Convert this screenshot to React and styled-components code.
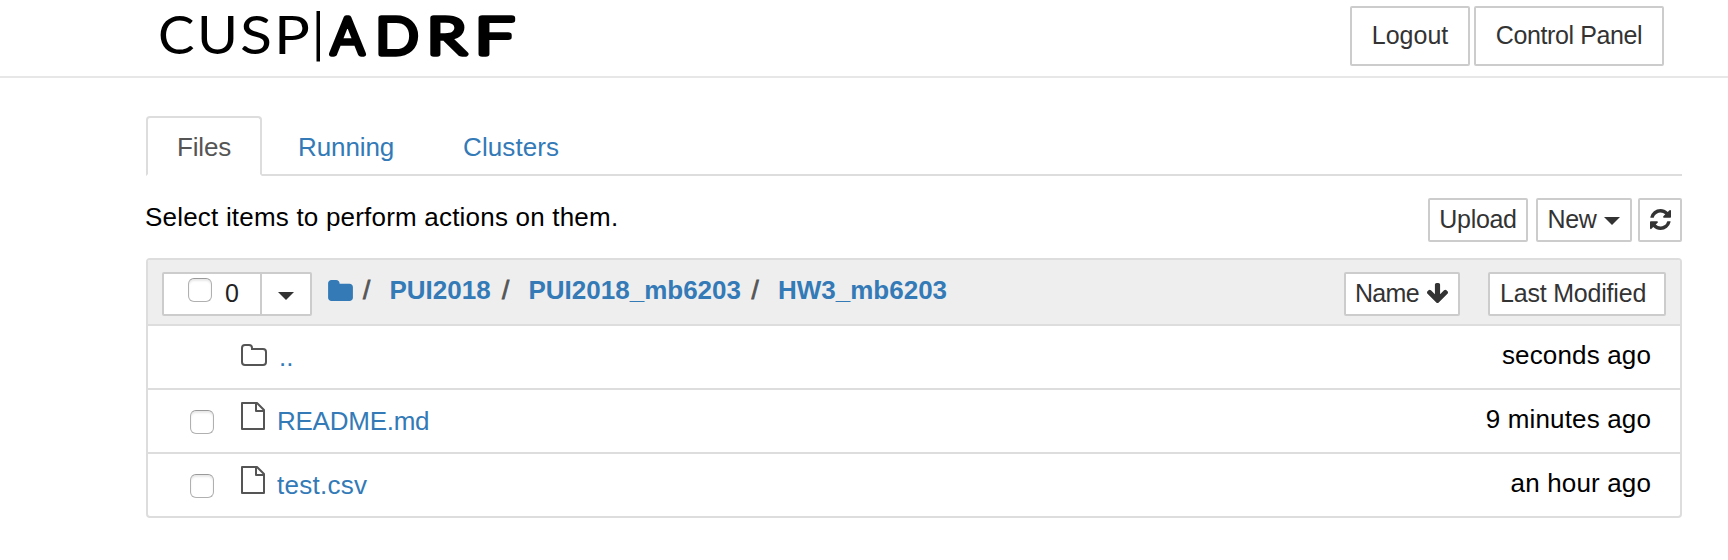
import React from "react";
import styled, { createGlobalStyle } from "styled-components";

const GlobalStyle = createGlobalStyle`
  * { box-sizing: border-box; }
  body {
    margin: 0;
    background: #fff;
    color: #000;
    font: 26px/36px "Liberation Sans", Arial, sans-serif;
  }
  svg { display: block; flex: none; }
`;

const Header = styled.header`
  display: flex;
  justify-content: space-between;
  align-items: flex-start;
  height: 78px;
  padding: 0 64px 0 158px;
  border-bottom: 2px solid #e7e7e7;
`;

const HeaderActions = styled.div`
  display: flex;
  gap: 4px;
  padding-top: 6px;
`;

const Button = styled.button`
  display: flex;
  align-items: center;
  justify-content: ${(p) => p.$align || "center"};
  width: ${(p) => p.$width}px;
  height: ${(p) => (p.$large ? 60 : 44)}px;
  padding: 0 0 2px ${(p) => p.$inset || 0}px;
  border: 2px solid #ccc;
  border-radius: 2px;
  background: #fff;
  color: #333;
  font-family: inherit;
  font-size: 25px;
  letter-spacing: ${(p) => p.$spacing || 0}px;
  line-height: 36px;
  white-space: nowrap;
`;

const Main = styled.main`
  padding: 38px 46px 0 146px;
`;

const Tabs = styled.nav`
  display: flex;
  height: 60px;
  border-bottom: 2px solid #ddd;
`;

const Tab = styled.a`
  height: 60px;
  width: ${(p) => p.$width}px;
  padding: 11px 0 0 ${(p) => (p.$active ? 29 : 34)}px;
  border: 2px solid ${(p) => (p.$active ? "#ddd" : "transparent")};
  border-bottom-color: ${(p) => (p.$active ? "#fff" : "transparent")};
  border-radius: 4px 4px 0 0;
  color: ${(p) => (p.$active ? "#555" : "#337ab7")};
  letter-spacing: ${(p) => p.$spacing || 0}px;
`;

const Toolbar = styled.div`
  display: flex;
  justify-content: space-between;
  height: 82px;
  padding-top: 22px;
`;

const Hint = styled.span`
  margin: 1px 0 0 -1px;
  letter-spacing: 0.2px;
`;

const ToolbarActions = styled.div`
  display: flex;
  > * + * { margin-left: 8px; }
  > :last-child { margin-left: 6px; }
`;

const Caret = styled.span`
  margin-left: ${(p) => p.$gap || 0}px;
  margin-top: 4px;
  border: 8px solid transparent;
  border-top-color: #333;
  border-bottom-width: 0;
`;

const List = styled.section`
  border: 2px solid #ddd;
  border-radius: 4px;
  overflow: hidden;
`;

const ListHeader = styled.div`
  display: flex;
  height: 64px;
  padding: 12px 14px 0;
  background: #eee;
`;

const SelectGroup = styled.div`
  display: flex;
  height: 44px;
  border: 2px solid #ccc;
  border-radius: 2px;
  background: #fff;
  color: #333;
  font-size: 25px;
`;

const SelectAll = styled.label`
  display: flex;
  width: 98px;
  padding-left: 24px;
  border-right: 2px solid #ccc;
`;

const Count = styled.span`
  margin: 1px 0 0 13px;
  color: #222;
`;

const SelectMenu = styled.span`
  display: flex;
  width: 48px;
  justify-content: center;
  align-items: center;
`;

const Check = styled.input.attrs({ type: "checkbox" })`
  appearance: none;
  flex: none;
  width: 24px;
  height: 24px;
  margin: ${(p) => p.$top}px 0 0;
  border: 1.5px solid #b0b0b0;
  border-top-color: #9a9a9a;
  border-radius: 6px;
  background: #fff;
  box-shadow: inset 0 2px 2px #e9e9e9;
`;

const Breadcrumb = styled.nav`
  display: flex;
  align-items: flex-start;
  flex: 1;
  padding-left: 16px;
  font-weight: 700;
  color: #555;
`;

const RootFolder = styled.svg`
  margin: 8px 10px 0 0;
`;

const Slash = styled.span`
  width: 26.5px;
  font-weight: 400;
  -webkit-text-stroke: 0.8px #555;
`;

const Crumb = styled.a`
  width: ${(p) => p.$width}px;
  color: #337ab7;
`;

const SortActions = styled.div`
  display: flex;
  gap: 28px;
`;

const ArrowDown = styled.svg`
  margin-left: 8px;
`;

const Row = styled.div`
  display: flex;
  height: 64px;
  border-top: 2px solid #ddd;
  padding: 0 29px 0 42px;
`;

const CheckCell = styled.span`
  width: 51px;
`;

const IconCell = styled.span`
  width: ${(p) => p.$width}px;
  padding-top: ${(p) => p.$top}px;
`;

const FileName = styled.a`
  flex: 1;
  padding-top: 13px;
  color: #337ab7;
  letter-spacing: ${(p) => p.$spacing || 0}px;
`;

const Modified = styled.span`
  padding-top: 11px;
  letter-spacing: 0.15px;
`;

const Letter = ({ x, width, children }) => (
  <tspan x={x} textLength={width} lengthAdjust="spacingAndGlyphs">{children}</tspan>
);

const Logo = () => (
  <svg width="370" height="76" viewBox="158 0 370 76" aria-label="CUSP ADRF">
    <g fontFamily="Lato, sans-serif">
      <text y="53.5" fontSize="52" fontWeight="400">
        <Letter x={158} width={36.5}>C</Letter>
        <Letter x={197} width={41}>U</Letter>
        <Letter x={240} width={32}>S</Letter>
        <Letter x={274} width={36}>P</Letter>
      </text>
      <rect x="316.5" y="11" width="3.5" height="50.5" />
      <text y="54" fontSize="51.5" fontWeight="300" stroke="#000" strokeWidth="5.5" strokeLinejoin="round">
        <Letter x={331} width={33}>A</Letter>
        <Letter x={375.5} width={43}>D</Letter>
        <Letter x={427} width={39}>R</Letter>
        <Letter x={475} width={39}>F</Letter>
      </text>
    </g>
  </svg>
);

const FolderIcon = () => (
  <svg width="26" height="22" viewBox="0 0 26 22" fill="none" stroke="#555" strokeWidth="2">
    <path d="M1 4Q1 1 4 1H8Q11 1 11 4V5H22Q25 5 25 8V18Q25 21 22 21H4Q1 21 1 18Z" />
  </svg>
);

const FileIcon = () => (
  <svg width="24" height="28" viewBox="0 0 24 28" fill="none" stroke="#555" strokeWidth="2" strokeLinejoin="round">
    <path d="M1 1H16L23 8V27H1ZM15 1V9H23" />
  </svg>
);

const RefreshIcon = () => (
  <svg width="21" height="21" viewBox="0 0 1536 1536" fill="#333">
    <path d="M1511 928q0 5-1 7-64 268-268 434.500T764 1536q-146 0-282.500-55T238 1324l-129 129q-19 19-45 19t-45-19-19-45V960q0-26 19-45t45-19h448q26 0 45 19t19 45-19 45l-137 137q71 66 161 102t187 36q134 0 250-65t186-179q11-17 53-117 8-23 30-23h192q13 0 22.500 9.500t9.500 22.500zM1536 128v448q0 26-19 45t-45 19h-448q-26 0-45-19t-19-45 19-45l138-138Q969 256 768 256q-134 0-250 65T332 500q-11 17-53 117-8 23-30 23H50q-13 0-22.500-9.500T18 608v-7q65-268 270-434.500T768 0q146 0 284 55.500T1297 212l130-129q19-19 45-19t45 19 19 45z" />
  </svg>
);

const rows = [
  { name: "README.md", modified: "9 minutes ago", spacing: -0.25 },
  { name: "test.csv", modified: "an hour ago", spacing: 0.25 },
];

export default function App() {
  return (
    <>
      <GlobalStyle />
      <Header>
        <Logo />
        <HeaderActions>
          <Button $large $width={120}>Logout</Button>
          <Button $large $width={190} $spacing={-0.4}>Control Panel</Button>
        </HeaderActions>
      </Header>
      <Main>
        <Tabs>
          <Tab $active $width={116} $spacing={-0.15}>Files</Tab>
          <Tab $width={165} $spacing={-0.1}>Running</Tab>
          <Tab $width={165} $spacing={0.1}>Clusters</Tab>
        </Tabs>
        <Toolbar>
          <Hint>Select items to perform actions on them.</Hint>
          <ToolbarActions>
            <Button $width={100} $spacing={-0.3}>Upload</Button>
            <Button $width={96} $spacing={-0.4}>
              New
              <Caret $gap={8} />
            </Button>
            <Button $width={44} aria-label="Refresh">
              <RefreshIcon />
            </Button>
          </ToolbarActions>
        </Toolbar>
        <List>
          <ListHeader>
            <SelectGroup>
              <SelectAll>
                <Check $top={4} />
                <Count>0</Count>
              </SelectAll>
              <SelectMenu><Caret /></SelectMenu>
            </SelectGroup>
            <Breadcrumb>
              <RootFolder width="25" height="21" viewBox="0 0 1664 1408" fill="#337ab7">
                <path d="M1664 480v704q0 92-66 158t-158 66H224q-92 0-158-66T0 1184V224Q0 132 66 66T224 0h320q92 0 158 66t66 158v32h672q92 0 158 66t66 158z" />
              </RootFolder>
              <Slash>/</Slash>
              <Crumb $width={112.5}>PUI2018</Crumb>
              <Slash>/</Slash>
              <Crumb $width={223}>PUI2018_mb6203</Crumb>
              <Slash>/</Slash>
              <Crumb>HW3_mb6203</Crumb>
            </Breadcrumb>
            <SortActions>
              <Button $width={116} $align="flex-start" $inset={9} $spacing={-0.7}>
                Name
                <ArrowDown width="21" height="20" viewBox="53 128 1558 1483" fill="#333">
                  <path d="M1611 832q0 53-37 90l-651 652q-39 37-91 37-53 0-90-37L91 922q-38-36-38-90 0-53 38-91l74-75q39-37 91-37 53 0 90 37l294 294V256q0-52 38-90t90-38h128q52 0 90 38t38 90v704l294-294q37-37 90-37 52 0 91 37l75 75q37 39 37 91z" />
                </ArrowDown>
              </Button>
              <Button $width={178} $align="flex-start" $inset={10} $spacing={-0.2}>Last Modified</Button>
            </SortActions>
          </ListHeader>
          <Row>
            <CheckCell />
            <IconCell $width={38} $top={18}><FolderIcon /></IconCell>
            <FileName>..</FileName>
            <Modified>seconds ago</Modified>
          </Row>
          {rows.map((r) => (
            <Row key={r.name}>
              <CheckCell><Check $top={20} /></CheckCell>
              <IconCell $width={36} $top={12}><FileIcon /></IconCell>
              <FileName $spacing={r.spacing}>{r.name}</FileName>
              <Modified>{r.modified}</Modified>
            </Row>
          ))}
        </List>
      </Main>
    </>
  );
}
